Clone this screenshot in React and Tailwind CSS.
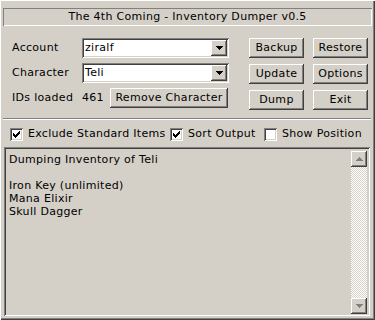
import React from 'react';

const raised = 'shadow-[inset_-1px_-1px_#404040,inset_1px_1px_#ffffff,inset_-2px_-2px_#808080,inset_2px_2px_#d4d0c8]';
const sunken = 'shadow-[inset_1px_1px_#808080,inset_-1px_-1px_#ffffff,inset_2px_2px_#404040,inset_-2px_-2px_#d4d0c8]';

// little pixel triangle, pointing down or up
const Arrow = ({ up = false, color = '#000000' }) => {
  const rows = [7, 5, 3, 1];
  const list = up ? [...rows].reverse() : rows;
  return (
    <svg width="7" height="4" viewBox="0 0 7 4" shapeRendering="crispEdges">
      {list.map((w, i) => (
        <rect key={i} x={(7 - w) / 2} y={i} width={w} height="1" fill={color} />
      ))}
    </svg>
  );
};

const Check = () => {
  const cols = [2, 3, 4, 3, 2, 1, 0];
  return (
    <svg width="7" height="7" viewBox="0 0 7 7" shapeRendering="crispEdges">
      {cols.map((y, x) => (
        <rect key={x} x={x} y={y} width="1" height="3" fill="#000000" />
      ))}
    </svg>
  );
};

const Button = ({ children, className = '' }) => (
  <div className={`h-[20px] bg-[#d4d0c8] ${raised} flex items-center justify-center whitespace-nowrap ${className}`}>
    {children}
  </div>
);

const Combo = ({ value }) => (
  <div className={`w-[147px] h-[20px] bg-white ${sunken} flex items-center p-[2px]`}>
    <span className="flex-1 pl-[1px]">{value}</span>
    <div className={`w-[16px] h-[16px] bg-[#d4d0c8] ${raised} flex items-center justify-center`}>
      <Arrow />
    </div>
  </div>
);

const CheckBox = ({ checked, label, className = '' }) => (
  <div className={`flex items-center ${className}`}>
    <div className={`w-[13px] h-[13px] bg-white ${sunken} flex items-center justify-center`}>
      {checked && <Check />}
    </div>
    <span className="ml-[5px] whitespace-nowrap">{label}</span>
  </div>
);

const App = () => {
  const lines = ['Dumping Inventory of Teli', '', 'Iron Key (unlimited)', 'Mana Elixir', 'Skull Dagger'];

  return (
    <div className="w-[375px] h-[320px] bg-[#d4d0c8] shadow-[inset_1px_1px_#ffffff,inset_-1px_-1px_#404040,inset_-2px_-2px_#808080] flex flex-col px-[3px] pt-[8px] font-['DejaVu_Sans',sans-serif] text-[11px] tracking-[0.3px] text-black">
      {/* Title */}
      <div className="h-[18px] w-[369px] shadow-[inset_1px_1px_#808080,inset_-1px_-1px_#ffffff] flex items-center justify-center">
        The 4th Coming - Inventory Dumper v0.5
      </div>

      {/* Controls */}
      <div className="flex pt-[12px] pl-[9px]">
        <div className="flex flex-col gap-[5px] w-[217px]">
          <div className="flex items-center h-[20px]">
            <span className="w-[70px]">Account</span>
            <Combo value="ziralf" />
          </div>
          <div className="flex items-center h-[20px]">
            <span className="w-[70px]">Character</span>
            <Combo value="Teli" />
          </div>
          <div className="flex items-center h-[20px]">
            <span className="w-[70px] whitespace-nowrap">IDs loaded</span>
            <span className="w-[28px]">461</span>
            <Button className="w-[118px]">Remove Character</Button>
          </div>
        </div>
        <div className="ml-[20px] grid grid-cols-2 gap-x-[9px] gap-y-[6px]">
          <Button className="w-[55px]">Backup</Button>
          <Button className="w-[55px]">Restore</Button>
          <Button className="w-[55px]">Update</Button>
          <Button className="w-[55px]">Options</Button>
          <Button className="w-[55px]">Dump</Button>
          <Button className="w-[55px]">Exit</Button>
        </div>
      </div>

      {/* Separator */}
      <div className="mt-[8px] w-[368px] h-[2px] border-t border-b border-t-[#808080] border-b-white" />

      {/* Options */}
      <div className="mt-[8px] h-[13px] flex items-center pl-[7px]">
        <CheckBox checked label="Exclude Standard Items" className="w-[160px]" />
        <CheckBox checked label="Sort Output" className="w-[94px]" />
        <CheckBox label="Show Position" />
      </div>

      {/* Output */}
      <div className={`mt-[6px] ml-[1px] w-[366px] h-[169px] ${sunken} p-[2px] flex`}>
        <div className="flex-1 pl-[3px] pt-[4px] leading-[13px] whitespace-pre">
          {lines.map((line, i) => (
            <div key={i} className="h-[13px]">{line}</div>
          ))}
        </div>
        <div className="w-[16px] mt-[2px] mr-[1px] flex flex-col">
          <div className={`h-[16px] bg-[#d4d0c8] ${raised} flex items-center justify-center`}>
            <Arrow up color="#808080" />
          </div>
          <div className="flex-1 bg-[conic-gradient(#ffffff_25%,#d4d0c8_0_50%,#ffffff_0_75%,#d4d0c8_0)] bg-size-[2px_2px]" />
          <div className={`h-[16px] bg-[#d4d0c8] ${raised} flex items-center justify-center`}>
            <Arrow color="#808080" />
          </div>
        </div>
      </div>
    </div>
  );
};

export default App;
